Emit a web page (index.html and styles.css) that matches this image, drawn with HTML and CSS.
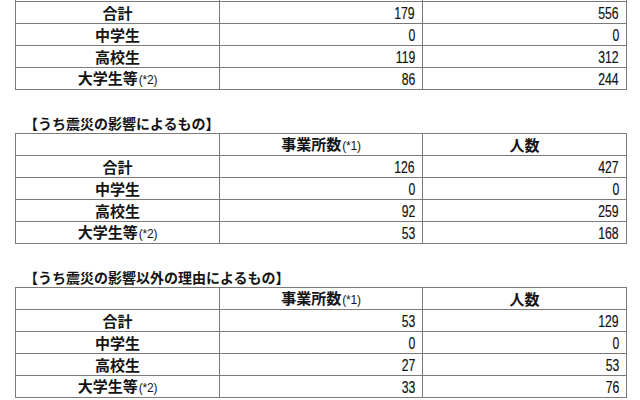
FILE: index.html
```html
<!DOCTYPE html>
<html lang="ja">
<head>
<meta charset="utf-8">
<link rel="stylesheet" href="styles.css">
</head>
<body>
<div class="page">
  <table class="stats first">
    <colgroup><col class="c1"><col class="c2"><col class="c3"></colgroup>
    <tr class="head"><td></td><td></td><td></td></tr>
    <tr><th>合計</th><td class="num"><span class="n">179</span></td><td class="num"><span class="n">556</span></td></tr>
    <tr><th>中学生</th><td class="num"><span class="n">0</span></td><td class="num"><span class="n">0</span></td></tr>
    <tr><th>高校生</th><td class="num"><span class="n">119</span></td><td class="num"><span class="n">312</span></td></tr>
    <tr><th>大学生等<span class="note">(*2)</span></th><td class="num"><span class="n">86</span></td><td class="num"><span class="n">244</span></td></tr>
  </table>

  <div class="title">【うち震災の影響によるもの】</div>
  <table class="stats">
    <colgroup><col class="c1"><col class="c2"><col class="c3"></colgroup>
    <tr class="head"><td></td><td>事業所数<span class="note">(*1)</span></td><td>人数</td></tr>
    <tr><th>合計</th><td class="num"><span class="n">126</span></td><td class="num"><span class="n">427</span></td></tr>
    <tr><th>中学生</th><td class="num"><span class="n">0</span></td><td class="num"><span class="n">0</span></td></tr>
    <tr><th>高校生</th><td class="num"><span class="n">92</span></td><td class="num"><span class="n">259</span></td></tr>
    <tr><th>大学生等<span class="note">(*2)</span></th><td class="num"><span class="n">53</span></td><td class="num"><span class="n">168</span></td></tr>
  </table>

  <div class="title">【うち震災の影響以外の理由によるもの】</div>
  <table class="stats">
    <colgroup><col class="c1"><col class="c2"><col class="c3"></colgroup>
    <tr class="head"><td></td><td>事業所数<span class="note">(*1)</span></td><td>人数</td></tr>
    <tr><th>合計</th><td class="num"><span class="n">53</span></td><td class="num"><span class="n">129</span></td></tr>
    <tr><th>中学生</th><td class="num"><span class="n">0</span></td><td class="num"><span class="n">0</span></td></tr>
    <tr><th>高校生</th><td class="num"><span class="n">27</span></td><td class="num"><span class="n">53</span></td></tr>
    <tr><th>大学生等<span class="note">(*2)</span></th><td class="num"><span class="n">33</span></td><td class="num"><span class="n">76</span></td></tr>
  </table>
</div>
</body>
</html>
```

FILE: styles.css
```css
html, body {
  margin: 0;
  padding: 0;
  background: #ffffff;
}

body {
  font-family: "Noto Sans CJK JP", "Noto Sans", sans-serif;
  color: #141414;
  overflow: hidden;
}

.page {
  padding-left: 15px;
}

.stats {
  border-collapse: collapse;
  table-layout: fixed;
  width: 611px;
}

.stats.first {
  margin-top: -21px;
}

.c1 { width: 204px; }
.c2 { width: 203px; }
.c3 { width: 204px; }

.stats tr {
  height: 22px;
}

.stats th,
.stats td {
  border: 1px solid #7a7a7a;
  padding: 0;
  font-size: 15px;
  line-height: 15px;
  font-weight: 700;
  text-align: center;
  vertical-align: middle;
  white-space: nowrap;
  overflow: hidden;
}

.stats td.num {
  text-align: right;
  padding-right: 7px;
  font-family: "Liberation Sans", "Arial", sans-serif;
  font-weight: 400;
}

.n {
  display: inline-block;
  font-size: 16.5px;
  line-height: 16px;
  transform: scaleX(0.74);
  transform-origin: right center;
  color: #111111;
  -webkit-text-stroke: 0.2px #111111;
}

.note {
  font-family: "Liberation Sans", "Arial", sans-serif;
  font-size: 12px;
  font-weight: 400;
  margin-left: 1px;
  letter-spacing: -0.2px;
}

.title {
  margin-top: 23px;
  height: 20px;
  line-height: 20px;
  font-size: 14px;
  font-weight: 700;
  padding-left: 9px;
  white-space: nowrap;
}
```
